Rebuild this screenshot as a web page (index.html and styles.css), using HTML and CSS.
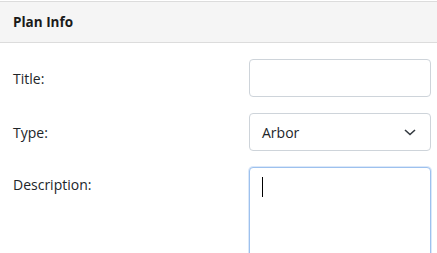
FILE: index.html
```html
<!DOCTYPE html>
<html>
<head>
<meta charset="utf-8">
<link rel="stylesheet" href="styles.css">
</head>
<body>
<div class="panel">
  <div class="panel-header">Plan Info</div>
  <div class="panel-body">
    <div class="row">
      <label class="label">Title:</label>
      <div class="control"></div>
    </div>
    <div class="row">
      <label class="label">Type:</label>
      <div class="control select">
        <span>Arbor</span>
        <svg class="chev" width="12" height="7" viewBox="0 0 12 7"><path d="M1 1 L6 5.5 L11 1" fill="none" stroke="#343a40" stroke-width="1.6"/></svg>
      </div>
    </div>
    <div class="row top">
      <label class="label desc">Description:</label>
      <div class="control textarea"><span class="caret"></span></div>
    </div>
  </div>
</div>
</body>
</html>
```
FILE: styles.css
```css
html, body {
  margin: 0;
  padding: 0;
  background: #fff;
  font-family: "Open Sans", "Noto Sans", sans-serif;
  font-size: 14px;
  color: #212529;
}
.panel {
  width: 437px;
  padding-top: 1px;
}
.panel-header {
  background: #f5f5f5;
  border-top: 1px solid #dcdcdc;
  border-bottom: 1px solid #dcdcdc;
  height: 40px;
  line-height: 40px;
  padding-left: 13px;
  font-weight: 700;
  font-size: 13.5px;
  color: #1a1a1a;
}
.panel-body {
  display: flex;
  flex-direction: column;
  gap: 16px;
  padding: 16px 6px 0 13px;
}
.row {
  display: flex;
  align-items: center;
  justify-content: space-between;
}
.row.top {
  align-items: flex-start;
}
.label {
  font-size: 14px;
  color: #212529;
}
.label.desc {
  padding-top: 8px;
}
.control {
  box-sizing: border-box;
  width: 182px;
  height: 38px;
  border: 1px solid #ced4da;
  border-radius: 4px;
  background: #fff;
}
.select {
  display: flex;
  align-items: center;
  justify-content: space-between;
  padding: 0 14px 0 12px;
  font-size: 14px;
}
.textarea {
  height: 100px;
  border-color: #9dc1ee;
  box-shadow: 0 0 0 1px #dbe8f9;
  padding: 9px 12px;
}
.caret {
  display: block;
  width: 1px;
  height: 20px;
  background: #000;
}
```
